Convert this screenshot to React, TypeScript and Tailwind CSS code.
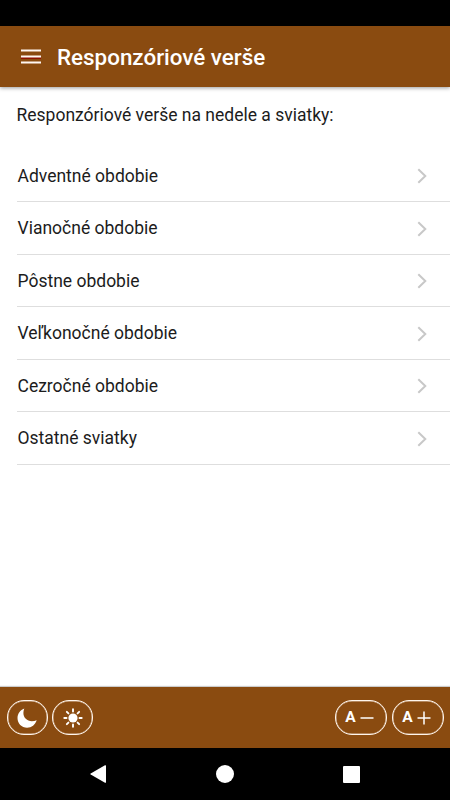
import type { ReactNode } from 'react';

const seasons = [
  'Adventné obdobie',
  'Vianočné obdobie',
  'Pôstne obdobie',
  'Veľkonočné obdobie',
  'Cezročné obdobie',
  'Ostatné sviatky',
];

const rays = [0, 45, 90, 135, 180, 225, 270, 315];

function ToolButton({ wide, label, children }: { wide?: boolean; label: string; children: ReactNode }) {
  return (
    <button
      aria-label={label}
      className={`flex h-[35px] items-center justify-center rounded-[17px] border border-[#fff5ec] text-white shadow-[inset_0_0_0_0.5px_rgba(255,245,236,0.7)] ${wide ? 'w-[52px] pr-[2px]' : 'w-[41px]'}`}
    >
      {children}
    </button>
  );
}

function Header() {
  return (
    <header className="relative z-10 flex h-[61px] shrink-0 items-center bg-[#8a4b10] pl-[21px] text-white shadow-[0_1px_4px_rgba(0,0,0,0.4)]">
      <svg width="20" height="15" viewBox="0 0 20 15" aria-label="Menu">
        <path d="M0 9h20" stroke="#8c1200" strokeWidth="2" />
        <path d="M0 1.5h20M0 7.5h20M0 13.5h20" stroke="#fff7f2" strokeWidth="2.2" />
      </svg>
      <h1 className="mt-px ml-4 text-[22.4px] leading-none font-medium">Responzóriové verše</h1>
    </header>
  );
}

function SeasonRow({ name }: { name: string }) {
  return (
    <li className="ml-[17px] flex h-[52.5px] items-center justify-between border-b border-[#dedede] pr-[23px]">
      <span className="mt-px ml-[0.5px] text-[17.5px]">{name}</span>
      <svg className="mt-[2px]" width="10" height="16" viewBox="0 0 10 16" fill="none" stroke="#c8c8c8" strokeWidth="2">
        <path d="M1.3 1.2 8.3 8 1.3 14.8" />
      </svg>
    </li>
  );
}

export default function App() {
  return (
    <div className="flex h-[800px] w-[450px] flex-col overflow-hidden bg-white font-['Roboto','Liberation_Sans',sans-serif] text-[#1c1c1c]">
      <div className="h-[26px] shrink-0 bg-black" />
      <Header />
      <main className="flex-1">
        <p className="pt-[14.5px] pl-[16.5px] text-[17.5px] leading-[26px]">Responzóriové verše na nedele a sviatky:</p>
        <ul className="pt-[22px]">
          {seasons.map((name) => (
            <SeasonRow key={name} name={name} />
          ))}
        </ul>
      </main>
      <footer className="flex h-[61px] shrink-0 items-center justify-between bg-[#8a4b10] px-[6.5px] shadow-[0_-1px_1px_rgba(0,0,0,0.2)]">
        <div className="flex gap-[4.5px]">
          <ToolButton label="Tmavý režim">
            <svg width="20" height="20" viewBox="0 0 20 20" fill="white">
              <path d="M7.3.4C6.700 1.900 6.400 3.400 6.400 5c0 4.700 3.700 8.200 8.400 8.200 1.700 0 3.300-.3 4.900-1-1.400 4.500-5.100 7.500-9.600 7.500C4.600 19.700.5 15.500.5 10 .5 5.600 3.200 1.900 7.300.4Z" />
            </svg>
          </ToolButton>
          <ToolButton label="Svetlý režim">
            <svg width="20" height="20" viewBox="0 0 20 20">
              <circle cx="10" cy="10" r="4.6" fill="white" />
              {rays.map((angle) => (
                <path
                  key={angle}
                  d="M10 1.300v2.200"
                  stroke="white"
                  strokeWidth="1.900"
                  strokeLinecap="round"
                  transform={`rotate(${angle} 10 10)`}
                />
              ))}
            </svg>
          </ToolButton>
        </div>
        <div className="flex gap-[5px]">
          <ToolButton wide label="Zmenšiť písmo">
            <span className="text-[15.5px] font-bold">A</span>
            <svg className="ml-[4px]" width="14" height="14" viewBox="0 0 14 14">
              <path d="M0.5 7h13" stroke="white" strokeWidth="1.5" />
            </svg>
          </ToolButton>
          <ToolButton wide label="Zväčšiť písmo">
            <span className="text-[15.5px] font-bold">A</span>
            <svg className="ml-[4px]" width="14" height="14" viewBox="0 0 14 14">
              <path d="M0.5 7h13M7 0.500v13" stroke="white" strokeWidth="1.5" />
            </svg>
          </ToolButton>
        </div>
      </footer>
      <nav className="flex h-[52px] shrink-0 items-center justify-between bg-black pr-[90px] pl-[90px]">
        <svg width="16" height="18" viewBox="0 0 16 18" fill="white">
          <path d="M15 .3q1-.5 1 .5v16.400q0 1-1 .500L.7 9.600q-.8-.6 0-1.200Z" />
        </svg>
        <svg className="ml-[1px]" width="18" height="18" viewBox="0 0 18 18">
          <circle cx="9" cy="9" r="9" fill="white" />
        </svg>
        <div className="size-[17px] rounded-[1px] bg-white" />
      </nav>
    </div>
  );
}
